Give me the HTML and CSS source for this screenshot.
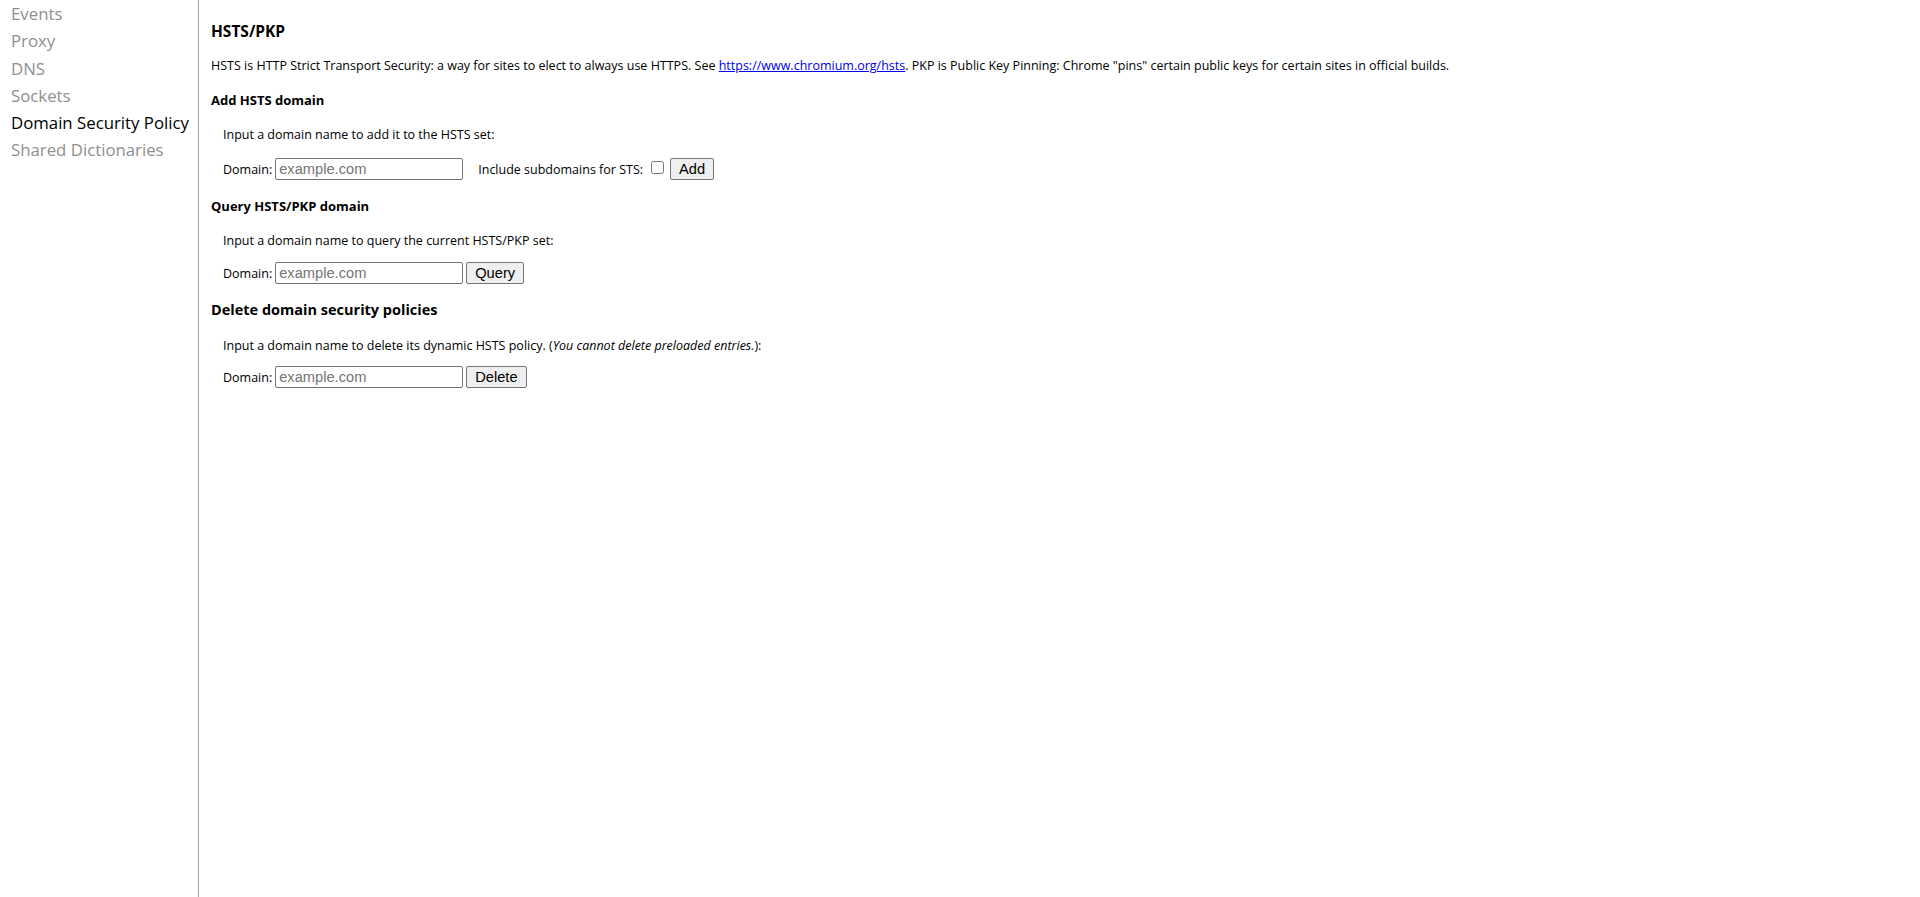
FILE: index.html
```html
<!DOCTYPE html>
<html lang="en">
<head>
<meta charset="utf-8">
<title>net-internals</title>
<link rel="stylesheet" href="styles.css">
</head>
<body>
<div class="page">
  <nav class="sidebar">
    <a class="tab">Events</a>
    <a class="tab">Proxy</a>
    <a class="tab">DNS</a>
    <a class="tab">Sockets</a>
    <a class="tab tab-active">Domain Security Policy</a>
    <a class="tab">Shared Dictionaries</a>
  </nav>
  <main class="content">
    <h2 class="title">HSTS/PKP</h2>
    <p class="intro">HSTS is HTTP Strict Transport Security: a way for sites to elect to always use HTTPS. See <a class="link" href="#">https://www.chromium.org/hsts</a>. PKP is Public Key Pinning: Chrome "pins" certain public keys for certain sites in official builds.</p>

    <h4 class="section">Add HSTS domain</h4>
    <div class="indent">
      <p class="hint">Input a domain name to add it to the HSTS set:</p>
      <div class="row row-first">
        <span class="lbl">Domain:</span>
        <input class="domain" type="text" placeholder="example.com">
        <span class="lbl lbl-sub">Include subdomains for STS:</span>
        <input class="check" type="checkbox">
        <button class="btn">Add</button>
      </div>
    </div>

    <h4 class="section">Query HSTS/PKP domain</h4>
    <div class="indent">
      <p class="hint">Input a domain name to query the current HSTS/PKP set:</p>
      <div class="row">
        <span class="lbl">Domain:</span>
        <input class="domain" type="text" placeholder="example.com">
        <button class="btn btn-next">Query</button>
      </div>
    </div>

    <h3 class="section-lg">Delete domain security policies</h3>
    <div class="indent">
      <p class="hint hint-after-lg">Input a domain name to delete its dynamic HSTS policy. (<i>You cannot delete preloaded entries.</i>):</p>
      <div class="row row-last">
        <span class="lbl">Domain:</span>
        <input class="domain" type="text" placeholder="example.com">
        <button class="btn btn-next">Delete</button>
      </div>
    </div>
  </main>
</div>
</body>
</html>
```

FILE: styles.css
```css
html, body {
  margin: 0;
  padding: 0;
  height: 100%;
  background: #ffffff;
}

body {
  font-family: "Segoe UI", "Open Sans", "Noto Sans", sans-serif;
  color: #000000;
}

.page {
  display: flex;
  min-height: 897px;
}

.sidebar {
  width: 198px;
  flex: none;
  border-right: 1px solid #a3a3a3;
  display: flex;
  flex-direction: column;
}

.tab {
  display: block;
  padding-left: 11px;
  font-size: 16.8px;
  line-height: 27.3px;
  color: #8f8f8f;
  white-space: nowrap;
}

.tab-active {
  color: #000000;
}

.content {
  flex: 1;
  padding-left: 12px;
}

.title {
  margin: 21px 0 0;
  font-size: 15.5px;
  line-height: 20px;
  font-weight: bold;
}

.intro {
  margin: 17px 0 0;
  font-size: 12.5px;
  line-height: 16px;
}

.link {
  color: #0000ee;
  text-decoration: underline;
}

.section {
  margin: 18px 0 0;
  font-size: 13px;
  line-height: 16px;
  font-weight: bold;
}

.section-lg {
  margin: 17px 0 0;
  font-size: 14.5px;
  line-height: 18px;
  font-weight: bold;
}

.indent {
  padding-left: 12px;
}

.hint {
  margin: 19px 0 0;
  font-size: 12.5px;
  line-height: 16px;
}

.hint-after-lg {
  margin-top: 19px;
}

.row {
  margin-top: 13px;
  height: 22px;
  display: flex;
  align-items: center;
  font-size: 12.5px;
}

.row-first {
  margin-top: 15px;
}

.row-last {
  margin-top: 12px;
}

.lbl {
  margin-right: 3px;
}

.lbl-sub {
  margin-left: 15px;
  margin-right: 0;
}

.domain {
  box-sizing: border-box;
  width: 188px;
  height: 22px;
  margin: 0;
  padding: 1px 3px;
  border: 1px solid #767676;
  border-radius: 2px;
  font-family: "Liberation Sans", Arial, sans-serif;
  font-size: 14.67px;
  color: #000000;
  background: #ffffff;
}

.domain::placeholder {
  color: #757575;
}

.check {
  width: 13px;
  height: 13px;
  margin: 0 6px 4px 8px;
}

.btn {
  box-sizing: border-box;
  height: 22px;
  margin: 0;
  padding: 0 8px;
  border: 1px solid #767676;
  border-radius: 2px;
  background: #efefef;
  font-family: "Liberation Sans", Arial, sans-serif;
  font-size: 14.67px;
  color: #000000;
}

.btn-next {
  margin-left: 3px;
}
```
